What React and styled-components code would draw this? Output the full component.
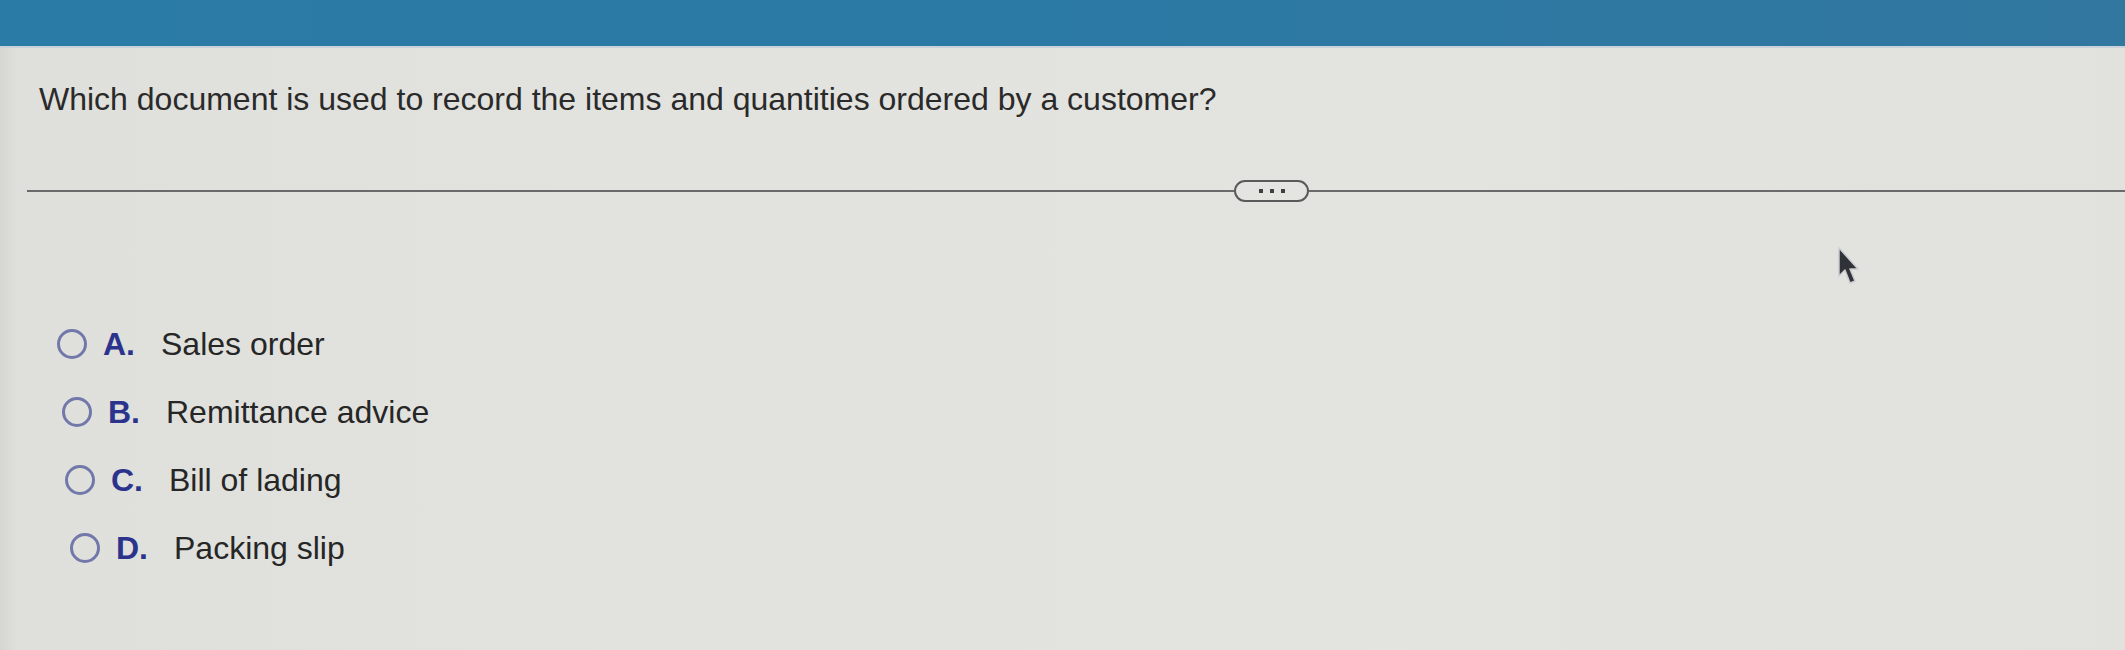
import React from "react";
import styled, { createGlobalStyle } from "styled-components";

const Global = createGlobalStyle`
  html, body { margin: 0; padding: 0; }
  body {
    background: #e0e0dc;
    font-family: "Liberation Sans", Arial, Helvetica, sans-serif;
  }
`;

const Page = styled.div`
  position: relative;
  width: 2125px;
  height: 650px;
  overflow: hidden;
  background: linear-gradient(90deg, #d6d6d2 0px, #dfdfdb 18px, #e2e2de 600px, #e3e3df 1400px, #e1e1dd 2125px);
`;

const TopBar = styled.div`
  height: 46px;
  background: linear-gradient(90deg, #2a7ba6 0%, #2a7aa5 40%, #3177a0 100%);
  border-bottom: 2px solid #c9d2da;
`;

const Question = styled.div`
  padding: 33px 0 0 39px;
  font-size: 32px;
  line-height: 37px;
  color: #2a2a2a;
  letter-spacing: 0;
`;

const DividerRow = styled.div`
  display: flex;
  align-items: center;
  margin-top: 62px;
  padding-left: 27px;
`;

const Line = styled.div`
  height: 2px;
  background: #6a6a6a;
  flex: ${(p) => (p.$grow ? "1 1 auto" : "0 0 auto")};
  width: ${(p) => (p.$width ? `${p.$width}px` : "auto")};
`;

const Pill = styled.button`
  width: 75px;
  height: 22px;
  box-sizing: border-box;
  border: 2px solid #5a5a5a;
  border-radius: 11px;
  background: #e4e4e1;
  display: flex;
  align-items: center;
  justify-content: center;
  gap: 7px;
  padding: 0;
`;

const Dot = styled.span`
  width: 4px;
  height: 4px;
  background: #404040;
`;

const Options = styled.div`
  display: flex;
  flex-direction: column;
  margin-top: 108px;
`;

const OptionRow = styled.label`
  display: flex;
  align-items: center;
  height: 68px;
  padding-left: ${(p) => 57 + p.$indent}px;
`;

const Radio = styled.span`
  width: 30px;
  height: 30px;
  box-sizing: border-box;
  border: 3px solid #7378aa;
  border-radius: 50%;
  flex: 0 0 auto;
`;

const Letter = styled.span`
  margin-left: 16px;
  width: 58px;
  font-size: 32px;
  font-weight: bold;
  color: #2b338c;
`;

const OptionText = styled.span`
  font-size: 32px;
  color: #262626;
`;

const Cursor = styled.svg`
  position: absolute;
  left: 1836px;
  top: 246px;
`;

const options = [
  { letter: "A.", text: "Sales order", indent: 0 },
  { letter: "B.", text: "Remittance advice", indent: 5 },
  { letter: "C.", text: "Bill of lading", indent: 8 },
  { letter: "D.", text: "Packing slip", indent: 13 },
];

export default function App() {
  return (
    <>
      <Global />
      <Page>
        <TopBar />
        <Question>
          Which document is used to record the items and quantities ordered by a customer?
        </Question>
        <DividerRow>
          <Line $width={1207} />
          <Pill aria-label="more">
            <Dot />
            <Dot />
            <Dot />
          </Pill>
          <Line $grow />
        </DividerRow>
        <Options>
          {options.map((o) => (
            <OptionRow key={o.letter} $indent={o.indent}>
              <Radio />
              <Letter>{o.letter}</Letter>
              <OptionText>{o.text}</OptionText>
            </OptionRow>
          ))}
        </Options>
        <Cursor width="24" height="42" viewBox="0 0 24 42">
          <path
            d="M3 2 L3 30 L9 24 L14 37 L19 35 L14 23 L22 23 Z"
            fill="#2f3236"
            stroke="#c8ccd0"
            strokeWidth="1.5"
            strokeLinejoin="round"
          />
        </Cursor>
      </Page>
    </>
  );
}
